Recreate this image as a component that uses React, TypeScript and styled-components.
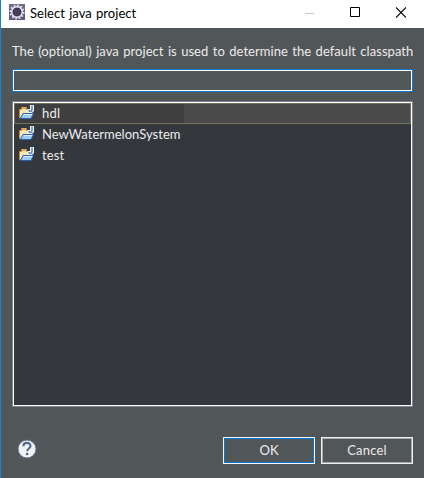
import React from "react";
import styled, { createGlobalStyle } from "styled-components";

const GlobalStyle = createGlobalStyle`
  * { box-sizing: border-box; }
  body { margin: 0; overflow: hidden; }
`;

const Dialog = styled.div`
  width: 424px;
  height: 478px;
  display: flex;
  flex-direction: column;
  border-left: 1px solid #1883d7;
  background: #515658;
  color: #ececec;
  font-family: Lato, "Open Sans", sans-serif;
  font-size: 13px;
  line-height: 20px;
`;

const TitleBar = styled.header`
  height: 28px;
  flex: none;
  display: flex;
  align-items: center;
  padding: 0 18px 4px 8px;
  background: #fff;
  color: #000;
`;

const Label = styled.span<{ $spacing?: number; $words?: number }>`
  letter-spacing: ${(p) => p.$spacing ?? 0}px;
  word-spacing: ${(p) => p.$words ?? 0}px;
  white-space: nowrap;
`;

const Title = styled(Label)`
  flex: 1;
  margin-left: 5px;
  padding-top: 1px;
`;

const WindowControls = styled.div`
  display: flex;
  gap: 36px;
`;

const Content = styled.main`
  flex: 1;
  display: flex;
  flex-direction: column;
  padding: 13px 11px 14px 11px;
`;

const Message = styled.div`
  height: 28px;
  flex: none;
`;

const FilterInput = styled.input`
  display: block;
  width: 401px;
  height: 23px;
  flex: none;
  margin: 0;
  padding: 0 4px;
  border: 1px solid #0f78d4;
  outline: 1px solid #fff;
  outline-offset: -2px;
  background: #515658;
  color: #ececec;
  font: inherit;
`;

const ProjectList = styled.ul`
  width: 401px;
  height: 306px;
  flex: none;
  margin: 9px 0 0;
  padding: 1px;
  list-style: none;
  border: 1px solid #82858f;
  box-shadow: inset 0 0 0 1px #fff;
  background: #34373c;
`;

const ProjectRow = styled.li<{ $selected?: boolean }>`
  height: 21px;
  display: flex;
  align-items: center;
  padding: 0 0 ${(p) => (p.$selected ? 1 : 2)}px ${(p) => (p.$selected ? 3 : 4)}px;
  border: ${(p) => (p.$selected ? "1px solid #74725b" : "0")};
  background: ${(p) =>
    p.$selected ? "linear-gradient(90deg, #3f3f3f 169px, #4a4a4a 169px)" : "transparent"};
  gap: 8px;
`;

const Footer = styled.footer`
  display: flex;
  align-items: center;
  margin-top: auto;
`;

const HelpButton = styled.button`
  width: 20px;
  height: 20px;
  margin: 0 auto 3px 5px;
  padding: 0;
  border: 0;
  background: none;
  display: flex;
`;

const Button = styled.button<{ $primary?: boolean }>`
  width: 92px;
  height: 27px;
  margin-left: 6px;
  padding: 0 0 1px;
  border: 1px solid ${(p) => (p.$primary ? "#f4f4f4" : "#f0f0f0")};
  box-shadow: inset 0 0 0 1px ${(p) => (p.$primary ? "#0078d7" : "#a7a9aa")};
  background: #515658;
  color: #ececec;
  font: inherit;
`;

const AppIcon = () => (
  <svg width="16" height="16" viewBox="0 0 16 16">
    <rect width="16" height="16" fill="#5f5880" />
    <path d="M0 0h16v5H0z" fill="#75698a" />
    <circle cx="8" cy="8" r="6.7" fill="none" stroke="#e4e4ea" strokeWidth="1.6" strokeDasharray="1.8 1.7" />
    <circle cx="8" cy="8" r="5.3" fill="#37354f" stroke="#eeeef1" strokeWidth="1.5" />
    <path d="M5 6.5h6M4.5 8.5h7M5 10.5h6" stroke="#57506f" strokeWidth=".8" />
  </svg>
);

const FolderIcon = () => (
  <svg width="16" height="16" viewBox="0 0 16 16">
    <path d="M1.5 13V4.5h2v-2h5v2h4V9" fill="#fbe7b4" stroke="#c58a3c" />
    <path d="M4 2h4v2H4z" fill="#e2a858" />
    <path d="M2.5 13.5 5 8.5h10.5l-2.5 5z" fill="#9ccbf4" stroke="#2d60ad" />
    <path d="M5.6 9.5h8.6" stroke="#d7edff" />
    <path d="M12 0h4v6l-2 2h-3L9.5 6V4H12z" fill="#f2f7fb" />
    <path d="M14 .5v4.3c0 2.2-2.7 2.2-3.2.2" fill="none" stroke="#4d81ae" strokeWidth="1.5" />
  </svg>
);

const HelpIcon = () => (
  <svg width="20" height="20" viewBox="0 0 20 20">
    <circle cx="10" cy="10" r="9" fill="#f0f1f2" stroke="#627493" />
    <path d="M6.3 7.2C6.5 2.7 13.6 2.9 13.5 7c-.1 2.6-3.2 2.5-3.3 5.3" fill="none" stroke="#526789" strokeWidth="2.1" />
    <circle cx="10.1" cy="15" r="1.35" fill="#526789" />
  </svg>
);

const projects = [
  { name: "hdl", spacing: 0.2 },
  { name: "NewWatermelonSystem", spacing: 0.02 },
  { name: "test", spacing: 0.1 },
];

export default function App() {
  return (
    <>
      <GlobalStyle />
      <Dialog>
        <TitleBar>
          <AppIcon />
          <Title $spacing={0.05} $words={0.8}>Select java project</Title>
          <WindowControls>
            <svg width="10" height="11"><path d="M1 6.5h9" stroke="#c8c8c8" /></svg>
            <svg width="10" height="11"><path d="M.5.5h9v9h-9z" fill="none" stroke="#000" /></svg>
            <svg width="10" height="11"><path d="m0 .5 10 10m0-10-10 10" stroke="#000" strokeWidth="1.1" /></svg>
          </WindowControls>
        </TitleBar>
        <Content>
          <Message>
            <Label $spacing={0.05} $words={1}>
              The (optional) java project is used to determine the default classpath
            </Label>
          </Message>
          <FilterInput aria-label="Project filter" />
          <ProjectList>
            {projects.map((p, i) => (
              <ProjectRow key={p.name} $selected={i === 0}>
                <FolderIcon />
                <Label $spacing={p.spacing}>{p.name}</Label>
              </ProjectRow>
            ))}
          </ProjectList>
          <Footer>
            <HelpButton aria-label="Help"><HelpIcon /></HelpButton>
            <Button $primary>OK</Button>
            <Button><Label $spacing={0.2}>Cancel</Label></Button>
          </Footer>
        </Content>
      </Dialog>
    </>
  );
}
